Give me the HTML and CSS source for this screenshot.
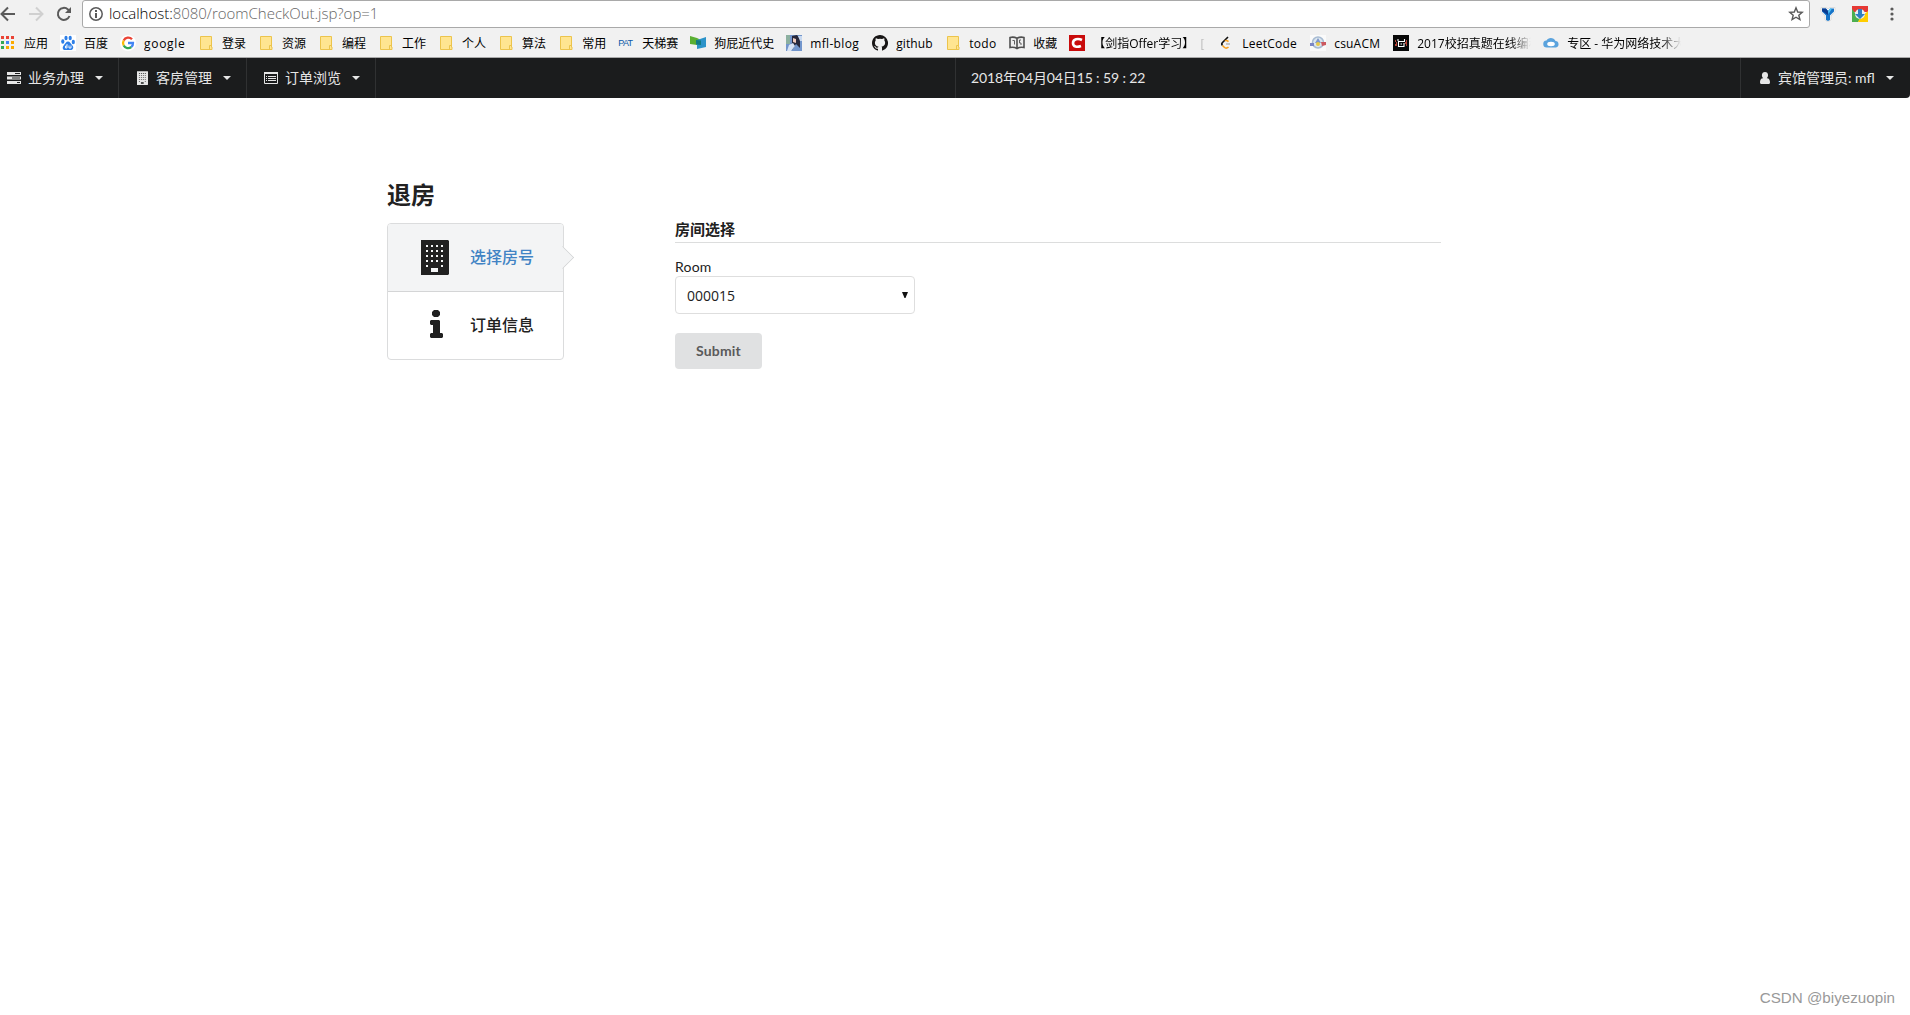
FILE: index.html
```
<!DOCTYPE html>
<html lang="zh-CN">
<head>
<meta charset="UTF-8">
<title>退房</title>
<link rel="stylesheet" href="styles.css">
</head>
<body>

<svg class="defs">
    <symbol id="folder" viewBox="0 0 16 16"><path d="M2.500 1.500h11v10.500h.5v2.500H2.500z" fill="#ffe591" stroke="#ecc44c"/><path d="M11.500 14v-3.500h2" fill="none" stroke="#ecc44c"/></symbol>
    <symbol id="building" viewBox="0 0 28 35"><path fill="currentColor" fill-rule="evenodd" d="M0 0h27l1 1v33l-1 1H0zM5 5v2h2V5zm5 0v2h2V5zm5 0v2h2V5zm5 0v2h2V5zM5 10v2h2v-2zm5 0v2h2v-2zm5 0v2h2v-2zm5 0v2h2v-2zM5 15v2h2v-2zm5 0v2h2v-2zm5 0v2h2v-2zm5 0v2h2v-2zM5 20v2h2v-2zm5 0v2h2v-2zm5 0v2h2v-2zm5 0v2h2v-2zM5 25v2h2v-2zm15 0v2h2v-2zM10 28v4h7v-4z"/></symbol>
</svg>

<div class="browser">
    <div class="toolbar">
        <svg class="nav-icon" viewBox="0 0 16 16"><path d="M15 8H2M8 1.500L1.500 8 8 14.500" fill="none" stroke="#5a5a5a" stroke-width="2"/></svg>
        <svg class="nav-icon" viewBox="0 0 16 16"><path d="M1 8h13M8 1.500L14.500 8 8 14.500" fill="none" stroke="#d0d0d0" stroke-width="2"/></svg>
        <svg class="nav-icon" viewBox="0 0 16 16"><path d="M13.500 10A6 6 0 1 1 12 3.500l1.500 1.500" fill="none" stroke="#5a5a5a" stroke-width="2"/><path d="M15 1v6H9z" fill="#5a5a5a"/></svg>
        <div class="address">
            <svg class="info" viewBox="0 0 14 14"><circle cx="7" cy="7" r="6.200" fill="none" stroke="#5a5a5a" stroke-width="1.500"/><path d="M7 3v2M7 6v5" stroke="#5a5a5a" stroke-width="2"/></svg>
            <span class="url">localhost:<span class="path">8080/roomCheckOut.jsp?op=1</span></span>
            <svg class="star" viewBox="0 0 16 16"><path d="M8 1.800l1.700 4.200 4.500.3-3.400 2.900 1.100 4.400L8 11.200l-3.900 2.400 1.100-4.400L1.800 6.300l4.500-.3z" fill="none" stroke="#5a5a5a" stroke-width="1.400"/></svg>
        </div>
        <svg class="ext" viewBox="0 0 16 16"><path d="M1 1.500h5.500L8 3l1.500-1.500H15v4L11 10v4l-3 2-3-2v-4L1 5.500z" fill="#fff" stroke="#ddd"/><path d="M2 2.500h4L8 5l2-2.500h4v3L10 9.500v4.500l-2 1-2-1V9.500l-4-4z" fill="#1674c8"/><path d="M2 2.500h4L8 5v4L2 5z" fill="#0b3d91"/><path d="M8 5l2-2.500h2L8.500 8z" fill="#4fc3f5"/></svg>
        <svg class="ext" viewBox="0 0 16 16"><path d="M0 0h16v6H0z" fill="#e53935"/><path d="M0 3l8 10-2 3H0z" fill="#4caf50"/><path d="M16 5v11H6l2-4z" fill="#ffcd00"/><circle cx="8" cy="8" r="5" fill="#e8eef2"/><path d="M6 3h4v5h3l-5 5-5-5h3z" fill="#2f7fc1"/></svg>
        <svg class="more" viewBox="0 0 4 14"><circle cx="2" cy="2" r="1.600"/><circle cx="2" cy="7" r="1.600"/><circle cx="2" cy="12" r="1.600"/></svg>
    </div>

    <div class="bookmarks">
        <div class="bookmark"><svg viewBox="0 0 16 16"><path d="M1 1h3v3H1zM6 1h3v3H6zM11 1h3v3h-3z" fill="#ea4335"/><path d="M1 6h3v3H1zM1 11h3v3H1z" fill="#34a853"/><path d="M6 6h3v3H6z" fill="#4285f4"/><path d="M11 6h3v3h-3zM6 11h3v3H6zM11 11h3v3h-3z" fill="#fbab00"/></svg><span>应用</span></div>
        <div class="bookmark"><svg viewBox="0 0 16 16"><path d="M0 0h16v16H0z" fill="#fff"/><g fill="#2d7fe8"><ellipse cx="2.800" cy="6.500" rx="1.600" ry="2.200"/><ellipse cx="6" cy="3" rx="1.600" ry="2.200"/><ellipse cx="10.200" cy="3" rx="1.600" ry="2.200"/><ellipse cx="13.300" cy="7" rx="1.600" ry="2.200"/><path d="M8 6.500c2 0 2.500 2 4 3.500 3 3 0 5.500-2 5H6c-3 .5-4.500-2-2-5C5.500 8.500 6 6.500 8 6.500z"/></g><path d="M7 9v4H5.500v-2H7M9 10.500V13h2v-2.500" fill="none" stroke="#fff" stroke-width=".9"/></svg><span>百度</span></div>
        <div class="bookmark google"><svg viewBox="0 0 16 16"><circle cx="8" cy="8" r="8" fill="#fff"/><g fill="none" stroke-width="2.300"><path d="M12 4.300A5 5 0 0 0 3.700 5.500" stroke="#ea4335"/><path d="M3.700 5.500a5 5 0 0 0 0 5" stroke="#fbbc05"/><path d="M3.700 10.500a5 5 0 0 0 7.600 1.500" stroke="#34a853"/><path d="M11.300 12A5 5 0 0 0 13 8H8" stroke="#4285f4"/></g></svg><span>google</span></div>
        <div class="bookmark"><svg><use href="#folder"/></svg><span>登录</span></div>
        <div class="bookmark"><svg><use href="#folder"/></svg><span>资源</span></div>
        <div class="bookmark"><svg><use href="#folder"/></svg><span>编程</span></div>
        <div class="bookmark"><svg><use href="#folder"/></svg><span>工作</span></div>
        <div class="bookmark"><svg><use href="#folder"/></svg><span>个人</span></div>
        <div class="bookmark"><svg><use href="#folder"/></svg><span>算法</span></div>
        <div class="bookmark"><svg><use href="#folder"/></svg><span>常用</span></div>
        <div class="bookmark"><b class="pat">PAT</b><span>天梯赛</span></div>
        <div class="bookmark"><svg viewBox="0 0 16 16"><path d="M0 1l7 2 4 2v6l-4-1-7-1z" fill="#5aaf32"/><path d="M7 5l9-3v10l-9 2z" fill="#2c93c9"/><path d="M6 5l5 .5V10l-5-.5z" fill="#117a83"/></svg><span>狗屁近代史</span></div>
        <div class="bookmark mfl"><svg viewBox="0 0 16 16"><path d="M0 0h16v16H0z" fill="#7396cc"/><path d="M0 0h4v9H0z" fill="#8cb0a0"/><path d="M6 1l5-1 3 4v9l-4-4-4 6H3l3-7z" fill="#27283b"/><path d="M7 3l3 1v4L7 7z" fill="#efcbbd"/><path d="M3 10l4-2 2 3-4 5H1z" fill="#d8e4f5"/><path d="M12 1h4v5h-2z" fill="#c8d9f0"/></svg><span>mfl-blog</span></div>
        <div class="bookmark github"><svg viewBox="0 0 16 16"><path d="M8 0C3.580 0 0 3.580 0 8c0 3.540 2.290 6.530 5.470 7.590.4.070.55-.17.55-.38v-1.500c-2.200.5-2.700-.9-2.700-.9-.4-.9-.9-1.200-.9-1.200-.7-.5.1-.5.1-.5.8.1 1.200.8 1.200.8.7 1.200 1.900.9 2.300.7.1-.5.3-.9.5-1.100-1.800-.2-3.600-.9-3.600-4 0-.9.300-1.600.8-2.100-.1-.2-.4-1 .1-2.100 0 0 .7-.2 2.200.8a7.500 7.500 0 0 1 4 0c1.500-1 2.200-.8 2.200-.8.400 1.100.2 1.900.1 2.100.5.600.8 1.300.8 2.100 0 3.100-1.900 3.800-3.600 4 .3.200.5.700.5 1.500v2.200c0 .2.100.5.500.4A8 8 0 0 0 8 0z" fill="#181616"/></svg><span>github</span></div>
        <div class="bookmark todo"><svg><use href="#folder"/></svg><span>todo</span></div>
        <div class="bookmark"><svg viewBox="0 0 16 16"><path d="M1 2.500c3-.8 5-.3 7 .7 2-1 4-1.500 7-.7v10c-3-.6-5-.2-7 1-2-1.200-4-1.600-7-1zM8 3v11" fill="#eee" stroke="#505050" stroke-width="1.600"/><path d="M3.500 5.500h2v4M12 5h-1.500v3H12v2" fill="none" stroke="#606060"/></svg><span>收藏</span></div>
        <div class="bookmark offer"><svg viewBox="0 0 16 16"><path d="M0 0h16v16H0z" fill="#c90b0b"/><path d="M13 5C9 3 4 4 4 8s4 4.500 8 3" fill="none" stroke="#fff" stroke-width="2.600"/></svg><span>【剑指Offer学习】&nbsp; [</span></div>
        <div class="bookmark leet"><svg viewBox="0 0 16 16"><path d="M10 2L4.500 7.500c-1 1-1 2 0 3" fill="none" stroke="#111" stroke-width="1.600"/><path d="M4.500 10.500l2 2c1.500 1.200 2.500.8 4-.5M7 6c1-1 2-.7 3.500.6" fill="none" stroke="#f89f1b" stroke-width="1.600"/><path d="M8 9h4" stroke="#b3b3b3" stroke-width="1.500"/></svg><span>LeetCode</span></div>
        <div class="bookmark csu"><svg viewBox="0 0 16 16"><path d="M0 0h16v16H0z" fill="#fafafa"/><circle cx="8" cy="7.500" r="5.500" fill="#dbe6ee" stroke="#a7bbd2" stroke-width="1.500"/><path d="M0 8h4v3H0z" fill="#7b86c5"/><path d="M11 7h5v3l-4 1z" fill="#cc5960"/><path d="M8 3l3 5H5z" fill="#8098ca"/><circle cx="8" cy="9" r="2" fill="#e6c94a"/></svg><span>csuACM</span></div>
        <div class="bookmark exam"><svg viewBox="0 0 16 16"><path d="M0 0h16v16H0z" fill="#080808"/><path d="M5 4v2M11.500 4v2M5 6.500h7M5.500 6v5.500h5.500V8M7.500 9H9" fill="none" stroke="#fff" stroke-width="1.100"/><path d="M2 6h1M2 10h2M13 6h1M13 10h1M3 8h1M12 8h2" stroke="#ef5544" stroke-width="1.500"/></svg><span>2017校招真题在线编程</span></div>
        <div class="bookmark exam"><svg viewBox="0 0 16 16"><path d="M4 12.500a3.500 3.500 0 0 1-.5-7C5 2 11 2 12.500 6a3.300 3.300 0 0 1 .5 6.500z" fill="#5ba3dd"/><ellipse cx="8" cy="9" rx="3.800" ry="2.200" fill="#fff"/></svg><span>专区 - 华为网络技术大</span></div>
    </div>
</div>

<div class="menu">
    <div class="item first">
        <svg class="icon" viewBox="0 0 14 12"><path d="M0 0h14v3H0zM0 4.500h14v3H0zM0 9h14v3H0z" fill="currentColor"/><path d="M8 1.500h5M5 6h8M10 10.500h3" stroke="#1b1c1d"/></svg>
        <span>业务办理</span><i class="caret"></i>
    </div>
    <div class="item">
        <svg class="icon narrow"><use href="#building"/></svg>
        <span>客房管理</span><i class="caret"></i>
    </div>
    <div class="item orders">
        <svg class="icon" viewBox="0 0 14 12"><path d="M.5 1h13v10.500H.5z" fill="none" stroke="currentColor"/><path d="M0 0h14v2H0z" fill="currentColor"/><path d="M2 4.500h1M4 4.500h8M2 6.500h1M4 6.500h8M2 8.500h1M4 8.500h8" stroke="currentColor"/></svg>
        <span>订单浏览</span><i class="caret"></i>
    </div>
    <div class="item clock">2018年04月04日15 : 59 : 22</div>
    <div class="item user">
        <svg class="icon user-icon" viewBox="0 0 10 12"><path d="M5 0c4 0 3.500 5 1.800 6.200C9 6 10 8 10 10c0 1.500-.5 2-1.500 2h-7C.5 12 0 11.500 0 10c0-2 1-4 3.200-3.800C1.500 5 1 0 5 0z" fill="currentColor"/></svg>
        <span>宾馆管理员: mfl</span><i class="caret"></i>
    </div>
</div>

<div class="page">
    <h1>退房</h1>
    <div class="columns">
        <div class="steps">
            <div class="step active">
                <svg class="step-building"><use href="#building"/></svg>
                <span>选择房号</span>
            </div>
            <div class="step">
                <svg class="step-info" viewBox="0 0 13 28"><path d="M4 0h4l2 2v3L8 7H4L2 5V2zM1 10h8l1 1v12h2l1 1v3l-1 1H1l-1-1v-3l1-1h2v-8H1l-1-1v-3z" fill="currentColor"/></svg>
                <span>订单信息</span>
            </div>
        </div>
        <form class="form">
            <h4>房间选择</h4>
            <label for="room">Room</label>
            <div class="select">
                <select id="room"><option>000015</option></select>
                <svg viewBox="0 0 6 6"><path d="M0 0h6L3.500 6h-1z" fill="#111"/></svg>
            </div>
            <button type="button">Submit</button>
        </form>
    </div>
</div>

<div class="watermark">CSDN @biyezuopin</div>

</body>
</html>
```
FILE: styles.css
```
* {
    box-sizing: border-box;
}
body {
    margin: 0;
    height: 1015px;
    overflow: hidden;
    display: flex;
    flex-direction: column;
    background: #fff;
    color: #212121;
    font-family: Lato, "Noto Sans CJK SC", sans-serif;
    font-size: 14px;
}
svg {
    display: block;
    flex: none;
}
.defs {
    display: none;
}

/* browser bars */
.browser {
    height: 58px;
    background: #f1f1f1;
    border-bottom: 1px solid #a9a9a9;
    font-family: "Open Sans", "Noto Sans CJK SC", sans-serif;
}
.toolbar {
    display: flex;
    align-items: center;
    height: 28px;
}
.nav-icon {
    width: 16px;
    height: 16px;
    margin-right: 12px;
}
.address {
    display: flex;
    align-items: center;
    width: 1728px;
    height: 28px;
    margin-left: -2px;
    padding: 0 5px 0 6px;
    background: #fff;
    border: 1px solid #a9a9a9;
    border-radius: 3px;
}
.info {
    width: 14px;
    height: 14px;
}
.url {
    flex: 1;
    margin-left: 6px;
    padding-bottom: 2px;
    color: #000;
    font-size: 15px;
    font-weight: 300;
    letter-spacing: -0.02px;
    line-height: 24px;
}
.path {
    color: #666;
}
.star {
    width: 16px;
    height: 16px;
}
.ext {
    width: 16px;
    height: 16px;
    margin-left: 16px;
}
.address + .ext {
    margin-left: 10px;
}
.more {
    width: 4px;
    height: 14px;
    margin-left: 22px;
    fill: #5a5a5a;
}
.bookmarks {
    display: flex;
    align-items: center;
    height: 29px;
    gap: 12px;
    color: #000;
    font-size: 12px;
    line-height: 18px;
}
.bookmark {
    display: flex;
    flex: none;
    align-items: center;
    gap: 8px;
}
.bookmark svg {
    width: 16px;
    height: 16px;
}
.bookmark span {
    padding-top: 2px;
    white-space: nowrap;
    overflow: hidden;
}
.google span {
    width: 42px;
    letter-spacing: 0.7px;
}
.mfl span {
    width: 50px;
    letter-spacing: 0.35px;
}
.github span {
    width: 37px;
    letter-spacing: 0.1px;
}
.todo span {
    width: 28px;
    letter-spacing: 0.3px;
}
.offer span {
    width: 113px;
    -webkit-mask-image: linear-gradient(to right, #000 85%, transparent);
    mask-image: linear-gradient(to right, #000 85%, transparent);
}
.leet span {
    width: 56px;
    letter-spacing: 0.25px;
}
.csu span {
    width: 47px;
    letter-spacing: 0.2px;
}
.exam span {
    width: 114px;
    -webkit-mask-image: linear-gradient(to right, #000 82%, transparent);
    mask-image: linear-gradient(to right, #000 82%, transparent);
}
.pat {
    width: 16px;
    color: #0a58a8;
    font: 9px "Liberation Sans", sans-serif;
    letter-spacing: -0.6px;
}

/* top menu */
.menu {
    display: flex;
    height: 40px;
    background: #1b1c1d;
    border-radius: 0 0 4px 0;
    color: #e6e6e6;
}
.item {
    display: flex;
    align-items: center;
    width: 128px;
    padding-left: 18px;
    border-right: 1px solid #303132;
    line-height: 20px;
    white-space: nowrap;
}
.first {
    width: 119px;
    padding-left: 7px;
}
.orders {
    width: 129px;
    padding-left: 17px;
}
.icon {
    width: 14px;
    height: 12px;
    margin-right: 7px;
}
.narrow {
    width: 11px;
    height: 14px;
    margin-right: 8px;
}
.caret {
    margin-left: 11px;
    border: 4px solid transparent;
    border-top-color: currentColor;
    border-bottom: 0;
}
.clock {
    width: 786px;
    margin-left: auto;
    padding-left: 15px;
    border-left: 1px solid #303132;
    letter-spacing: -0.12px;
}
.user {
    width: 169px;
    padding-left: 19px;
    border-right: 0;
}
.user-icon {
    width: 10px;
    margin-right: 8px;
}

/* check-out page */
.page {
    width: 1054px;
    margin: 80px 0 0 387px;
}
h1 {
    margin: 0;
    height: 45px;
    font-size: 24px;
    line-height: 34px;
}
.columns {
    display: flex;
    align-items: flex-start;
    gap: 111px;
}
.steps {
    width: 177px;
    border: 1px solid #dbdcdd;
    border-radius: 4px;
}
.step {
    display: flex;
    align-items: center;
    height: 67px;
    font-size: 16px;
    font-weight: 500;
}
.step span {
    padding-bottom: 3px;
}
.step.active {
    position: relative;
    height: 68px;
    background: #f3f4f5;
    border-bottom: 1px solid #d4d5d6;
    border-radius: 3px 3px 0 0;
    color: #212121;
}
/* arrow on the right edge of the current step */
.step.active::after {
    content: "";
    position: absolute;
    top: 25px;
    right: -8px;
    width: 16px;
    height: 16px;
    background: #f3f4f5;
    border: solid #d4d5d6;
    border-width: 1px 1px 0 0;
    transform: rotate(45deg);
    clip-path: polygon(0 0, 100% 0, 100% 100%);
}
.step.active span {
    color: #4183c4;
}
.step-building {
    width: 28px;
    height: 35px;
    margin: 0 21px 0 33px;
}
.step-info {
    width: 13px;
    height: 28px;
    margin: 0 27px 4px 42px;
}
.form {
    flex: 1;
}
h4 {
    margin: 0 0 13px;
    height: 20px;
    border-bottom: 1px solid #dcdddd;
    font-size: 15px;
    line-height: 12px;
}
label {
    display: block;
    height: 20px;
    line-height: 22px;
    letter-spacing: 0.2px;
}
.select {
    display: flex;
    align-items: center;
    width: 240px;
    height: 38px;
    padding-right: 6px;
    border: 1px solid #dedede;
    border-radius: 4px;
}
.select svg {
    width: 6px;
    height: 6px;
}
select {
    flex: 1;
    padding: 0 11px;
    appearance: none;
    background: none;
    border: 0;
    color: #212121;
    font: 14px "Open Sans", sans-serif;
}
button {
    width: 87px;
    height: 36px;
    margin-top: 19px;
    padding: 0 6px 2px;
    background: #e0e1e2;
    border: 0;
    border-radius: 4px;
    color: #5a5a5a;
    font: bold 14px Lato, sans-serif;
    letter-spacing: 0.15px;
}

.watermark {
    align-self: flex-end;
    margin: auto 15px 5px 0;
    color: #999;
    font: 15.2px/24px "Liberation Sans", sans-serif;
}
```
